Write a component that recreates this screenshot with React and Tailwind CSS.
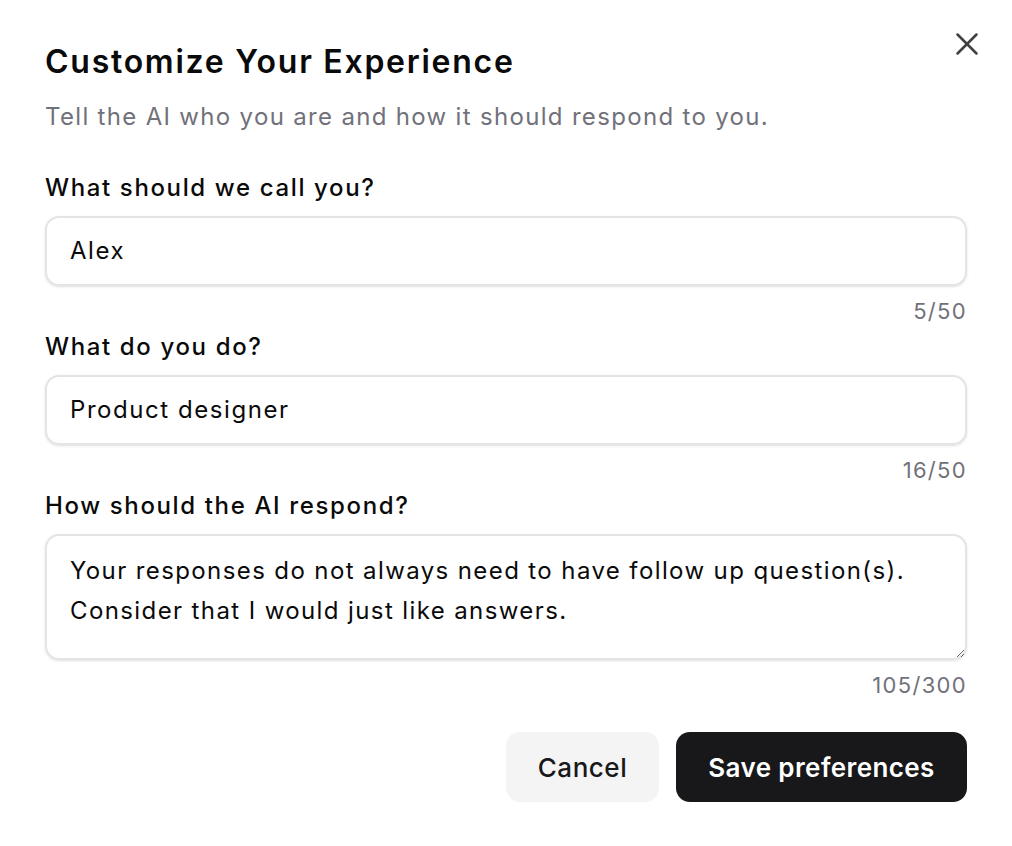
import { X } from 'lucide-react';

export default function App() {
  const fields = [
    { label: 'What should we call you?', value: 'Alex', count: '5/50' },
    { label: 'What do you do?', value: 'Product designer', count: '16/50' },
  ];

  return (
    <div className="min-h-screen bg-white font-['Inter',sans-serif] text-[#0a0a0a]">
      <div className="relative px-[45px] pt-[42px]">
        {/* Close */}
        <button className="absolute right-[26px] top-[25px] text-[#404040]">
          <X className="w-[38px] h-[38px]" strokeWidth={1.6} />
        </button>

        <h2 className="text-[32px] leading-[40px] font-semibold tracking-[0.054em]">
          Customize Your Experience
        </h2>
        <p className="mt-[19px] text-[24px] leading-[32px] tracking-[0.055em] text-[#71717a]">
          Tell the AI who you are and how it should respond to you.
        </p>

        <div className="mt-[39px]">
          {fields.map((f, i) => (
            <div key={f.label} className={i > 0 ? 'mt-[6px]' : ''}>
              <label className="block text-[24px] leading-[32px] font-medium tracking-[0.068em]">{f.label}</label>
              <div className="mt-[12px] h-[70px] rounded-[14px] border-2 border-[#e4e4e7] shadow-sm flex items-center px-[23px] text-[24px] tracking-[0.065em]">
                {f.value}
              </div>
              <div className="mt-[11px] text-right text-[22px] leading-[28px] tracking-[0.06em] text-[#71717a]">{f.count}</div>
            </div>
          ))}

          <div className="mt-[6px]">
            <label className="block text-[24px] leading-[32px] font-medium tracking-[0.068em]">How should the AI respond?</label>
            <textarea
              readOnly
              className="mt-[12px] block w-full h-[126px] rounded-[14px] border-2 border-[#e4e4e7] shadow-sm pl-[23px] pr-[10px] pt-[15px] text-[24px] leading-[40px] tracking-[0.058em] outline-none resize-y"
              value={'Your responses do not always need to have follow up question(s).\nConsider that I would just like answers.'}
            />
            <div className="mt-[11px] text-right text-[22px] leading-[28px] tracking-[0.06em] text-[#71717a]">105/300</div>
          </div>
        </div>

        <div className="mt-[33px] flex justify-end gap-[17px]">
          <button className="h-[70px] w-[153px] rounded-[14px] bg-[#f4f4f5] text-[26px] font-medium tracking-[0.02em] text-[#18181b]">
            Cancel
          </button>
          <button className="h-[70px] w-[291px] rounded-[14px] bg-[#18181b] text-[26px] font-semibold tracking-[0.015em] text-white">
            Save preferences
          </button>
        </div>
      </div>
    </div>
  );
}
